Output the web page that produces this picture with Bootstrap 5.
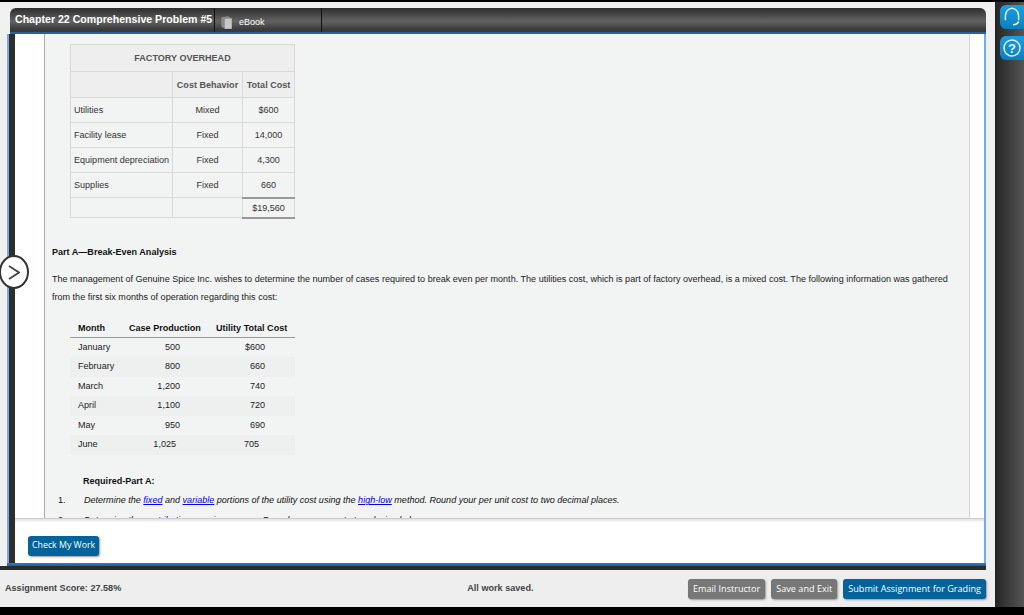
<!DOCTYPE html>
<html lang="en">
<head>
<meta charset="utf-8">
<title>Chapter 22 Comprehensive Problem #5</title>
<link rel="stylesheet" href="https://cdn.jsdelivr.net/npm/bootstrap@5.3.0/dist/css/bootstrap.min.css">
<style>
html,body{height:615px;overflow:hidden;background:#222;font-family:"Liberation Sans",Arial,sans-serif;color:#222;}
.shell{width:1024px;height:615px;padding-top:2px;background:#000;}
.stage{height:605px;}
.mainpane{width:995px;height:605px;background:#f0f0f0;border-radius:0 0 4px 0;padding-top:6px;}
.sidepane{width:29px;height:605px;background:linear-gradient(90deg,#222 0,#2c2c2c 15%,#555 100%);padding:3px 0 0 5px;gap:7px;}
.sidebtn{width:24px;height:24px;background:linear-gradient(#1d9ee0,#0a7fc0);border-radius:6px 0 0 6px;}
.titlebar{height:26px;margin:0 9px 0 10px;background:linear-gradient(#2d2d2d,#626262 55%,#3a3a3a 90%);border-bottom:2px solid #2a5ea8;border-radius:6px 6px 0 0;color:#fff;}
.titletext{font-weight:700;font-size:10.6px;padding-left:5px;width:204px;white-space:nowrap;}
.ebooktab{width:108px;height:24px;border-left:1px solid #111;border-right:1px solid #111;font-size:9px;padding:5px 0 0 5px;gap:6px;color:#fff;}
.framebox{height:529px;margin:0 9px 0 7px;border-left:2px solid #7aa9ea;border-right:2px solid #7aa9ea;}
.darkedge{width:6px;background:#2e2e2e;}
.innercol{min-width:0;}
.scrollrow{height:484px;overflow:hidden;background:#fff;}
.contentcol{width:926px;margin-left:29px;border-left:1px solid #aaa;border-right:1px solid #d8d8d8;background:#f2f4f4;height:484px;overflow:hidden;padding:10px 0 0 25px;font-size:9.05px;}
.facttable{width:224px;border-collapse:collapse;table-layout:fixed;color:#333;}
.facttable td,.facttable th{border:1px solid #d6dada;padding:2px 3px 0;font-size:9.05px;}
.facttable th{background:#eeeeee;color:#555;text-align:center;font-weight:700;}
.rh1{height:27px;}.rh2{height:26px;}.rh3{height:25px;}.rh4{height:20px;}
.facttable .sumcell{border-top:2px solid #999;border-bottom:2px solid #999;}
.parthead{font-weight:700;color:#111;margin:27px 0 0 -18px;height:12px;line-height:12px;}
.bodytext{margin:12px 0 0 -18px;line-height:18px;width:905px;color:#222;}
.monthtable{width:225px;margin-top:15px;border-collapse:collapse;table-layout:fixed;color:#222;}
.monthtable th{font-size:9.05px;font-weight:700;color:#111;border-bottom:1px solid #999;height:17px;padding:0;white-space:nowrap;}
.monthtable td{height:19.5px;padding:1px 0 0;font-size:9.05px;}
.monthtable tr.stripe td{background:#eef0f0;}
.cellstart{padding-left:8px !important;}
.thcase{padding-left:4px !important;}
.thutil{padding-left:8px !important;}
.numcase{text-align:right;padding-right:28px !important;}
.numcaselast{text-align:right;padding-right:32px !important;}
.numutil{padding-left:42px !important;}
.numdollar{padding-left:37px !important;}
.numlast{padding-left:36px !important;}
.reqhead{font-weight:700;margin:20.5px 0 0 13px;color:#111;line-height:12px;}
.reqlist{margin:3px 0 0 -18px;line-height:20px;font-style:italic;color:#111;width:900px;}
.numcol{width:32px;padding-left:6px;font-style:normal;flex:none;}
.reqlist a{color:#0000ee;}
.checkbar{height:45px;background:#fff;border-top:1px solid #ccc;box-shadow:inset 0 2px 2px #e4e4e4;padding:10px 0 0 13px;}
.brandbtn{background:#04639a;color:#fff;border:0;border-radius:3px;font-family:"Open Sans",sans-serif;font-size:9.1px;padding:0 5px;height:20px;box-shadow:1px 1px 2px #999;}
.checkbtn{font-size:8.8px;padding:0 4px;}
.greybtn{background:#777;}
.framefoot{height:3px;margin:0 9px 0 7px;background:linear-gradient(#2f7fc8,#1f5e9e);}
.darkline{height:4px;margin-right:9px;background:#2b2b2b;}
.footbar{height:37px;background:#eee;font-size:9.1px;font-weight:700;color:#444;padding:1px 9px 0 5px;}
.savetext{margin-left:346px;}
.circlebtn{position:absolute;left:-1px;top:221px;width:30px;height:34px;background:#fff;border:2px solid #333;border-radius:50%;}
.framewrap{position:relative;}
</style>
</head>
<body>
<div class="shell">
<div class="stage d-flex">
<div class="mainpane d-flex flex-column">
  <div class="titlebar d-flex align-items-center">
    <div class="titletext">Chapter 22 Comprehensive Problem #5</div>
    <div class="ebooktab d-flex align-items-center">
      <svg width="13" height="15" viewBox="0 0 11 13" aria-hidden="true"><path d="M1 2 L7 1 L10 3 L10 12 L4 12 L1 10 Z" fill="#8a8a8a"/><path d="M4 3.5 L10 3 L10 12 L4 12 Z" fill="#c8c8c8"/></svg>
      <span>eBook</span>
    </div>
  </div>
  <div class="framewrap">
  <div class="framebox d-flex">
    <div class="darkedge"></div>
    <div class="innercol flex-grow-1 d-flex flex-column">
      <div class="scrollrow">
        <div class="contentcol">
          <table class="facttable">
            <colgroup><col style="width:102px"><col style="width:70px"><col style="width:52px"></colgroup>
            <tr class="rh1"><th colspan="3">FACTORY OVERHEAD</th></tr>
            <tr class="rh2"><th></th><th class="text-nowrap">Cost Behavior</th><th class="text-nowrap">Total Cost</th></tr>
            <tr class="rh3"><td>Utilities</td><td class="text-center">Mixed</td><td class="text-center">$600</td></tr>
            <tr class="rh3"><td>Facility lease</td><td class="text-center">Fixed</td><td class="text-center">14,000</td></tr>
            <tr class="rh3"><td class="text-nowrap">Equipment depreciation</td><td class="text-center">Fixed</td><td class="text-center">4,300</td></tr>
            <tr class="rh3"><td>Supplies</td><td class="text-center">Fixed</td><td class="text-center">660</td></tr>
            <tr class="rh4"><td></td><td></td><td class="text-center sumcell">$19,560</td></tr>
          </table>
          <div class="parthead">Part A—Break-Even Analysis</div>
          <p class="bodytext">The management of Genuine Spice Inc. wishes to determine the number of cases required to break even per month. The utilities cost, which is part of factory overhead, is a mixed cost. The following information was gathered from the first six months of operation regarding this cost:</p>
          <table class="monthtable">
            <colgroup><col style="width:55px"><col style="width:83px"><col style="width:87px"></colgroup>
            <tr><th class="cellstart">Month</th><th class="thcase">Case Production</th><th class="thutil">Utility Total Cost</th></tr>
            <tr><td class="cellstart">January</td><td class="numcase">500</td><td class="numdollar">$600</td></tr>
            <tr class="stripe"><td class="cellstart">February</td><td class="numcase">800</td><td class="numutil">660</td></tr>
            <tr><td class="cellstart">March</td><td class="numcase">1,200</td><td class="numutil">740</td></tr>
            <tr class="stripe"><td class="cellstart">April</td><td class="numcase">1,100</td><td class="numutil">720</td></tr>
            <tr><td class="cellstart">May</td><td class="numcase">950</td><td class="numutil">690</td></tr>
            <tr class="stripe"><td class="cellstart">June</td><td class="numcaselast">1,025</td><td class="numlast">705</td></tr>
          </table>
          <div class="reqhead">Required-Part A:</div>
          <ol class="reqlist list-unstyled">
            <li class="d-flex"><span class="numcol">1.</span><span>Determine the <a href="#">fixed</a> and <a href="#">variable</a> portions of the utility cost using the <a href="#">high-low</a> method. Round your per unit cost to two decimal places.</span></li>
            <li class="d-flex"><span class="numcol">2.</span><span>Determine the <a href="#">contribution margin</a> per case. Round your answer to two decimal places.</span></li>
          </ol>
        </div>
      </div>
      <div class="checkbar d-flex align-items-center">
        <button type="button" class="btn brandbtn checkbtn">Check My Work</button>
      </div>
    </div>
  </div>
  <div class="framefoot"></div>
  <div class="circlebtn d-flex align-items-center justify-content-center">
    <svg width="12" height="15" viewBox="0 0 12 15" aria-hidden="true"><path d="M1 1 L11 7.5 L1 14" fill="none" stroke="#444" stroke-width="1.8"/></svg>
  </div>
  </div>
  <div class="darkline"></div>
  <div class="footbar d-flex align-items-center">
    <div class="text-nowrap">Assignment Score: 27.58%</div>
    <div class="savetext text-nowrap">All work saved.</div>
    <div class="ms-auto d-flex" style="gap:6px">
      <button type="button" class="btn brandbtn greybtn">Email Instructor</button>
      <button type="button" class="btn brandbtn greybtn">Save and Exit</button>
      <button type="button" class="btn brandbtn">Submit Assignment for Grading</button>
    </div>
  </div>
</div>
<div class="sidepane d-flex flex-column">
  <div class="sidebtn d-flex align-items-center justify-content-center">
    <svg width="20" height="22" viewBox="0 0 18 20" aria-hidden="true"><path d="M3 13 V9 A6 7 0 0 1 15 9 V13" fill="none" stroke="#cfeeff" stroke-width="1.4"/><path d="M15 14 Q14 17 10 17" fill="none" stroke="#fff" stroke-width="1.4"/></svg>
  </div>
  <div class="sidebtn d-flex align-items-center justify-content-center">
    <svg width="20" height="20" viewBox="0 0 20 20" aria-hidden="true"><circle cx="10" cy="10" r="8" fill="none" stroke="#d8f0ff" stroke-width="1.5"/><text x="10" y="14.5" text-anchor="middle" fill="#e8f6ff" font-family="Liberation Sans" font-weight="700" font-size="13">?</text></svg>
  </div>
</div>
</div>
</div>
<script src="https://cdn.jsdelivr.net/npm/bootstrap@5.3.0/dist/js/bootstrap.bundle.min.js"></script>
</body>
</html>
